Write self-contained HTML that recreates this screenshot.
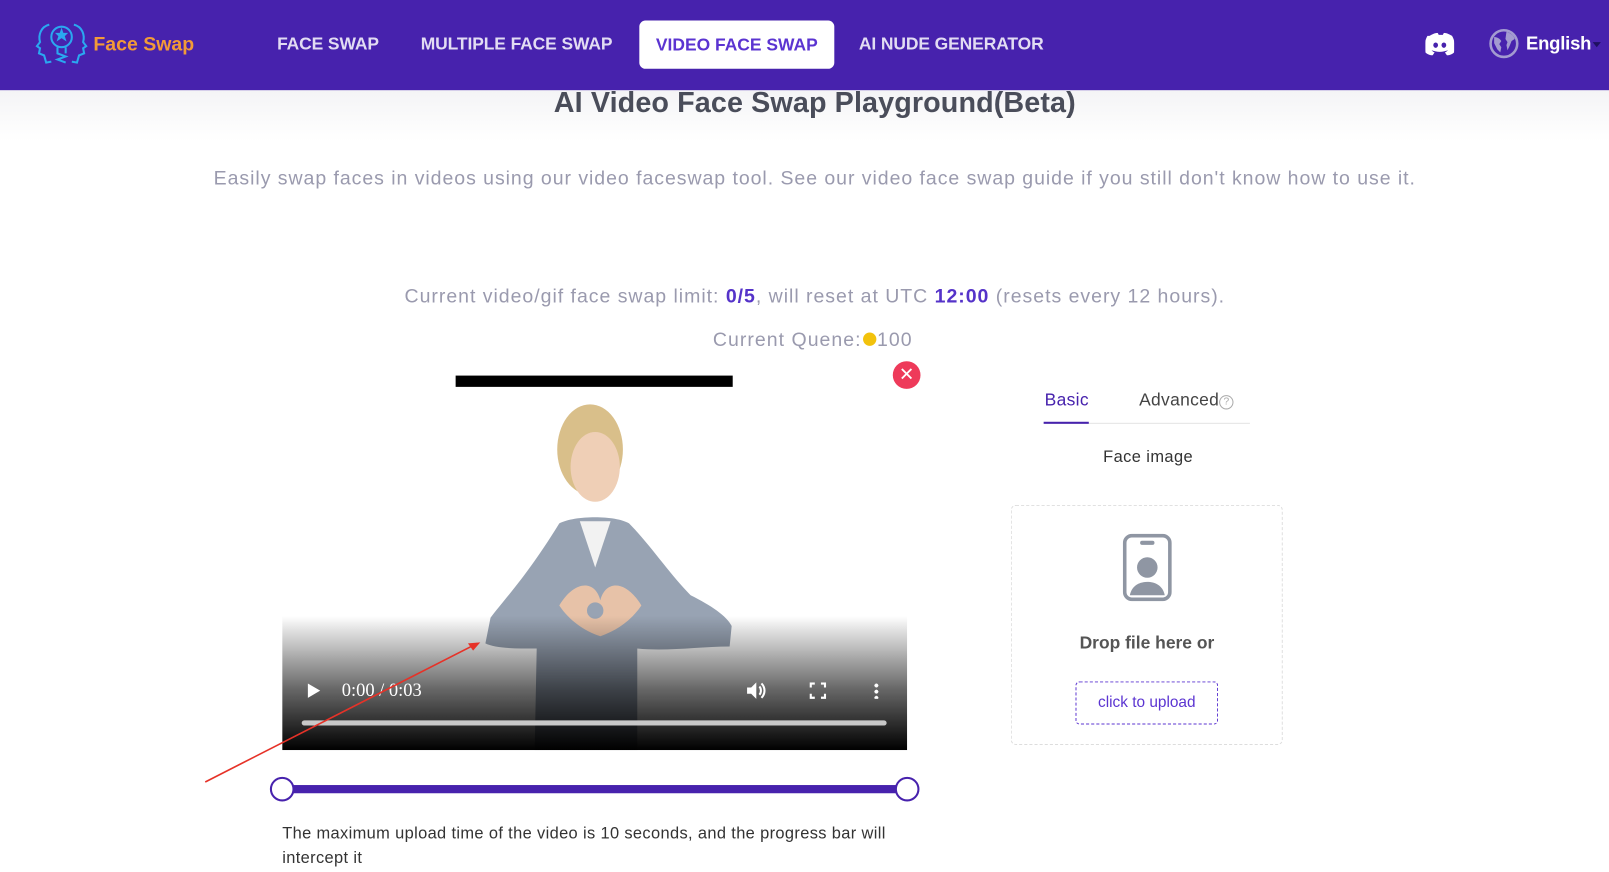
<!DOCTYPE html>
<html><head><meta charset="utf-8"><style>
*{margin:0;padding:0;box-sizing:border-box}
body{width:1609px;height:872px;overflow:hidden;background:#fff;font-family:"Liberation Sans",sans-serif;position:relative}
#w{position:absolute;left:0;top:0;width:1568px;height:850px;transform:scale(1.0262);transform-origin:0 0}
.hdr{position:absolute;left:0;top:0;width:1568px;height:88px;background:#4722ad}
.nav{position:absolute;top:33px;color:#e2dcf3;font-size:17px;font-weight:bold;letter-spacing:-0.1px}
.act{position:absolute;left:623px;top:20px;width:190px;height:47px;background:#fff;border-radius:6px;color:#5b34d1;font-size:17px;font-weight:bold;text-align:center;line-height:47px}
.band{position:absolute;left:0;top:88px;width:1568px;height:50px;background:linear-gradient(#f4f4f6,#fff)}
.t{position:absolute;white-space:nowrap}
.c{position:absolute;left:0;width:1588px;text-align:center;white-space:nowrap}
</style></head><body><div id="w">
<div class="hdr">
<svg style="position:absolute;left:34px;top:20px" width="52" height="46" viewBox="0 0 52 46" fill="none" stroke="#2aa8f0" stroke-width="2"><path d="M14 4c-8 2-11 10-9 17l-3 4 3 2-1 5 5 2 2 7 5-1M38 4c8 2 11 10 9 17l3 4-3 2 1 5-5 2-2 7-5-1"/><circle cx="26" cy="16" r="10"/><path d="M22 26v6l8 3-8 3 8 3M30 26v6"/><path d="M26 10l1 3h3l-2 2 1 3-3-2-3 2 1-3-2-2h3z" fill="#2aa8f0"/></svg>
<div class="t" style="left:91px;top:33px;color:#f29a38;font-size:19px;font-weight:bold">Face Swap</div>
<div class="nav" style="left:270px">FACE SWAP</div>
<div class="nav" style="left:410px">MULTIPLE FACE SWAP</div>
<div class="act">VIDEO FACE SWAP</div>
<div class="nav" style="left:837px">AI NUDE GENERATOR</div>
<svg style="position:absolute;left:1389px;top:32px" width="28" height="22" viewBox="0 0 28 22"><path d="M4 3c3-2 6-3 8-3l1 2c1 0 3 0 4 0l1-2c2 0 5 1 8 3 3 5 3 11 2 16-2 2-5 3-7 3l-2-3c1 0 2-1 3-2-5 2-11 2-16 0 1 1 2 2 3 2l-2 3c-2 0-5-1-7-3-1-5-1-11 2-16z" fill="#fff"/><ellipse cx="10" cy="12" rx="2.3" ry="2.6" fill="#4722ad"/><ellipse cx="18" cy="12" rx="2.3" ry="2.6" fill="#4722ad"/></svg>
<svg style="position:absolute;left:1451px;top:28px" width="29" height="29" viewBox="0 0 29 29"><circle cx="14.5" cy="14.5" r="13" fill="#4722ad" stroke="#a39bd0" stroke-width="2.5"/><path d="M5 8c3 0 6 2 7 4l-2 3 2 3-1 5-3-3-3-6zM17 3c3 1 7 3 8 7l-3 2-2 5-2 4-1-5 1-3-2-3z" fill="#a39bd0"/></svg>
<div class="t" style="left:1487px;top:32px;color:#fff;font-size:18px;font-weight:bold;letter-spacing:-0.2px">English</div>
<div style="position:absolute;left:1552px;top:41px;border:4px solid transparent;border-top:5px solid #1e1060"></div>
</div>
<div class="band"></div>
<div class="c" style="top:84px;font-size:28px;color:#4a4d5a;font-weight:bold;letter-spacing:0.1px">AI Video Face Swap Playground(Beta)</div>
<div class="c" style="top:164px;font-size:19px;color:#9a9aae;letter-spacing:0.93px">Easily swap faces in videos using our video faceswap tool. See our video face swap guide if you still don't know how to use it.</div>
<div class="c" style="top:279px;font-size:19px;color:#9a9aae;letter-spacing:0.95px">Current video/gif face swap limit: <b style="color:#5533c9">0/5</b>, will reset at UTC <b style="color:#5533c9">12:00</b> (resets every 12 hours).</div>
<div class="c" style="left:-2px;top:321px;font-size:19px;color:#9a9aae;letter-spacing:1px">Current Quene:<span style="display:inline-block;width:13px;height:13px;border-radius:50%;background:#f2c20c;margin:0 1px"></span>100</div>
<div style="position:absolute;left:444px;top:366px;width:270px;height:11px;background:#000"></div>
<div style="position:absolute;left:870px;top:352px;width:27px;height:27px;border-radius:50%;background:#ee3a5a;color:#fff;text-align:center;line-height:27px;font-size:18px">✕</div>
<div style="position:absolute;left:275px;top:380px;width:609px;height:351px;overflow:hidden;background:#fff">
<svg width="609" height="351" style="position:absolute;left:0;top:0"><ellipse cx="300" cy="58" rx="32" ry="44" fill="#d9bf8a"/><ellipse cx="305" cy="75" rx="24" ry="34" fill="#efcfb6"/><path d="M270 130c15-8 55-8 68 0 20 20 40 50 60 70 20 10 35 20 40 30l-2 20c-30 0-60 5-90 2l0 100h-100l2-100c-20 0-40 0-50-5l5-25c15-20 35-40 67-92z" fill="#98a3b3"/><path d="M290 128h30l-15 45z" fill="#f2f2f2"/><path d="M270 210c15-25 35-25 40-5 5-20 25-20 40 5-10 15-25 25-40 30-15-5-30-15-40-30z" fill="#e7c2a8"/><circle cx="305" cy="215" r="8" fill="#98a3b3"/></svg>
<div style="position:absolute;left:0;top:220px;width:609px;height:131px;background:linear-gradient(rgba(0,0,0,0),rgba(0,0,0,.6) 55%,#000)"></div>
<div style="position:absolute;left:25px;top:286px;border-left:12px solid #fff;border-top:7px solid transparent;border-bottom:7px solid transparent"></div>
<div class="t" style="left:58px;top:282px;color:#fff;font-size:18px;font-family:'Liberation Serif',serif">0:00 / 0:03</div>
<svg style="position:absolute;left:452px;top:284px" width="20" height="18" viewBox="0 0 20 18"><path d="M1 6h4l5-5v16l-5-5H1z" fill="#fff"/><path d="M13 5c2 2 2 6 0 8M15 2c4 4 4 10 0 14" stroke="#fff" stroke-width="2" fill="none"/></svg>
<svg style="position:absolute;left:514px;top:285px" width="16" height="16" fill="none" stroke="#fff" stroke-width="2.2"><path d="M1 5V1h4M11 1h4v4M15 11v4h-4M5 15H1v-4"/></svg>
<div style="position:absolute;left:577px;top:285px;width:4px;height:16px;background:radial-gradient(circle,#fff 1.8px,transparent 2px) 0 0/4px 6px"></div>
<div style="position:absolute;left:19px;top:322px;width:570px;height:5px;border-radius:3px;background:#c8c8c8"></div>
</div>
<svg style="position:absolute;left:0;top:0" width="1568" height="850"><line x1="200" y1="762" x2="465" y2="627" stroke="#e63228" stroke-width="1.6"/><path d="M468 626l-12 1 5 7z" fill="#e63228"/></svg>
<div style="position:absolute;left:275px;top:765px;width:609px;height:8px;background:#4722ad"></div>
<div style="position:absolute;left:263px;top:757px;width:24px;height:24px;border-radius:50%;background:#fff;border:2px solid #4722ad"></div>
<div style="position:absolute;left:872px;top:757px;width:24px;height:24px;border-radius:50%;background:#fff;border:2px solid #4722ad"></div>
<div class="t" style="left:275px;top:801px;font-size:16px;color:#333;line-height:24px;white-space:normal;width:610px;letter-spacing:0.35px">The maximum upload time of the video is 10 seconds, and the progress bar will intercept it</div>
<div class="t" style="left:1018px;top:380px;font-size:17px;color:#4722ad;letter-spacing:0.3px">Basic</div>
<div class="t" style="left:1110px;top:380px;font-size:17px;color:#444;letter-spacing:0.3px">Advanced<span style="display:inline-block;width:14px;height:14px;border:1px solid #aaa;border-radius:50%;font-size:10px;text-align:center;line-height:12px;color:#aaa;vertical-align:1px;letter-spacing:0">?</span></div>
<div style="position:absolute;left:1017px;top:412px;width:201px;height:1px;background:#e4e4e4"></div>
<div style="position:absolute;left:1017px;top:411px;width:44px;height:2px;background:#4722ad"></div>
<div class="t" style="left:1075px;top:437px;font-size:16px;color:#333;letter-spacing:0.4px">Face image</div>
<div style="position:absolute;left:985px;top:492px;width:265px;height:234px;border:1px dashed #ddd;border-radius:5px"></div>
<svg style="position:absolute;left:1094px;top:520px" width="48" height="66" viewBox="0 0 48 66"><rect x="2" y="2" width="44" height="62" rx="7" fill="none" stroke="#8f96a3" stroke-width="3.5"/><rect x="17" y="7" width="14" height="4" rx="2" fill="#8f96a3"/><circle cx="24" cy="33" r="10" fill="#8f96a3"/><path d="M7 60c2-10 10-13 17-13s15 3 17 13z" fill="#8f96a3"/></svg>
<div class="t" style="left:1052px;top:617px;font-size:17px;color:#555;font-weight:bold">Drop file here or</div>
<div style="position:absolute;left:1048px;top:664px;width:139px;height:42px;border:1px dashed #5b34d1;border-radius:4px;color:#5b34d1;font-size:15px;text-align:center;line-height:40px">click to upload</div>
</div></body></html>
